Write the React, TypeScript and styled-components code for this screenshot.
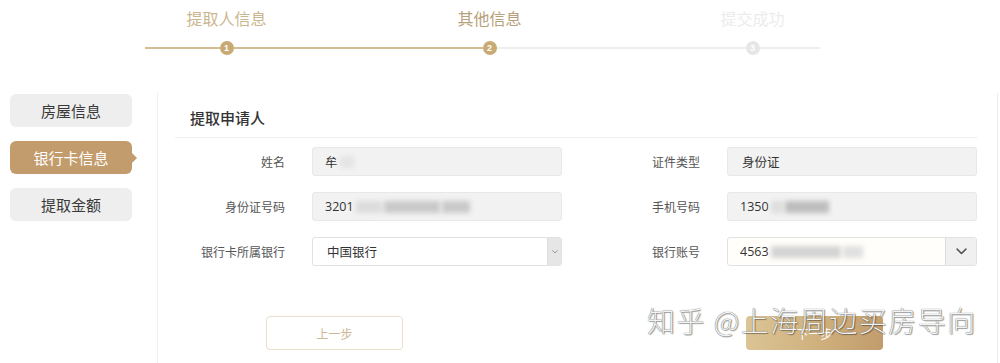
import React from "react";
import styled, { createGlobalStyle, css } from "styled-components";

const Global = createGlobalStyle`
  html, body { margin: 0; padding: 0; background: #fff; }
  body { font-family: "Noto Sans CJK SC", "Noto Sans", sans-serif; color: #333; }
  * { box-sizing: border-box; }
`;

const Page = styled.div`
  position: relative;
  width: 1000px;
  height: 363px;
  overflow: hidden;
  background: #fff;
`;

/* ---------- stepper ---------- */
const Stepper = styled.div`
  display: flex;
  margin-left: 95px;
  padding-top: 6px;
  height: 93px;
`;

const Step = styled.div`
  width: 263px;
  display: flex;
  flex-direction: column;
  align-items: center;
`;

const StepLabel = styled.div<{ $tone: "done" | "active" | "todo" }>`
  font-size: 16px;
  line-height: 24px;
  height: 24px;
  color: ${(p) => (p.$tone === "done" ? "#cbb68f" : p.$tone === "active" ? "#b8a07a" : "#ececec")};
`;

const Track = styled.div`
  margin-top: 11px;
  width: 100%;
  display: flex;
  align-items: center;
`;

const Seg = styled.div<{ $on: boolean; $trimStart?: number; $trimEnd?: number }>`
  flex: 1;
  height: 2px;
  ${(p) => {
    const c = p.$on ? "#d2bd93" : "#eeeeee";
    if (p.$trimStart)
      return css`background: linear-gradient(to right, transparent ${p.$trimStart}px, ${c} ${p.$trimStart}px);`;
    if (p.$trimEnd)
      return css`background: linear-gradient(to left, transparent ${p.$trimEnd}px, ${c} ${p.$trimEnd}px);`;
    return css`background: ${c};`;
  }}
`;

const Dot = styled.div<{ $on: boolean }>`
  width: 14px;
  height: 14px;
  border-radius: 50%;
  background: ${(p) => (p.$on ? "#c8ab74" : "#e6e6e6")};
  color: #fff;
  font-family: "Liberation Sans", sans-serif;
  font-size: 9px;
  font-weight: bold;
  display: flex;
  align-items: center;
  justify-content: center;
`;

/* ---------- body ---------- */
const Body = styled.div`
  display: flex;
  height: 270px;
`;

const Sidebar = styled.nav`
  width: 158px;
  border-right: 1px solid #f0f0f0;
  padding: 1px 0 0 10px;
  display: flex;
  flex-direction: column;
  gap: 14px;
`;

const NavItem = styled.div<{ $active?: boolean }>`
  position: relative;
  width: 122px;
  height: 33px;
  border-radius: 6px;
  font-size: 15px;
  display: flex;
  align-items: center;
  justify-content: center;
  background: #eeeeee;
  color: #3a3a3a;
  ${(p) =>
    p.$active &&
    css`
      background: #c29c6c;
      color: #fff;
      &::after {
        content: "";
        position: absolute;
        right: -5px;
        top: 50%;
        margin-top: -5px;
        border-left: 5px solid #c29c6c;
        border-top: 5px solid transparent;
        border-bottom: 5px solid transparent;
      }
    `}
`;

const Panel = styled.main`
  width: 840px;
  border-right: 1px solid #ededed;
  padding: 0 19px 0 17px;
`;

const Title = styled.h2`
  margin: 0;
  height: 45px;
  padding: 14px 0 0 15px;
  font-size: 15px;
  font-weight: 500;
  line-height: 22px;
  color: #333;
  border-bottom: 1px solid #f0f0f0;
`;

const FormGrid = styled.div`
  display: grid;
  grid-template-columns: 387px 387px;
  column-gap: 28px;
  row-gap: 16px;
  margin-top: 9px;
`;

const Field = styled.div`
  display: flex;
  align-items: center;
  gap: 27px;
`;

const Label = styled.label`
  width: 110px;
  text-align: right;
  font-size: 12px;
  color: #555;
`;

const Input = styled.div<{ $plain?: boolean; $tint?: string }>`
  width: 250px;
  height: 29px;
  border-radius: 3px;
  border: 1px solid ${(p) => (p.$plain ? "#e2e2e2" : "#e8e8e8")};
  background: ${(p) => p.$tint ?? (p.$plain ? "#fff" : "#f2f2f2")};
  display: flex;
  align-items: center;
  font-size: 12.5px;
  color: #333;
  overflow: hidden;
`;

const Value = styled.span<{ $pad?: number }>`
  flex: 1;
  padding-left: ${(p) => p.$pad ?? 12}px;
  display: flex;
  align-items: center;
  font-family: "Open Sans", "Noto Sans CJK SC", sans-serif;
`;

const Redact = styled.span<{ $w: number; $shade?: string }>`
  display: inline-block;
  width: ${(p) => p.$w}px;
  height: 12px;
  margin-left: 2px;
  background: ${(p) => p.$shade ?? "#c9c9c9"};
  filter: blur(2.5px);
`;

const ArrowBox = styled.span<{ $wide?: boolean }>`
  width: ${(p) => (p.$wide ? 31 : 14)}px;
  height: 100%;
  background: ${(p) => (p.$wide ? "#f0f0f0" : "#e6e6e6")};
  border-left: 1px solid #dcdcdc;
  display: flex;
  align-items: center;
  justify-content: center;
  color: ${(p) => (p.$wide ? "#555" : "#888")};
`;

const Actions = styled.div`
  display: grid;
  grid-template-columns: 387px 387px;
  column-gap: 28px;
  margin-top: 50px;
`;

const Button = styled.button<{ $primary?: boolean; $offset: number }>`
  margin-left: ${(p) => p.$offset}px;
  width: 137px;
  height: 34px;
  border-radius: 4px;
  font-family: "Noto Sans CJK SC", sans-serif;
  font-size: 12px;
  ${(p) =>
    p.$primary
      ? css`
          border: none;
          color: #fff;
          background: linear-gradient(100deg, #dcc597 0%, #d0b27f 50%, #c19b6c 100%);
        `
      : css`
          border: 1px solid #eadfcb;
          color: #cbb896;
          background: #fff;
        `}
`;

const Watermark = styled.div`
  position: absolute;
  left: 647px;
  top: 300px;
  font-size: 28px;
  font-weight: 300;
  letter-spacing: 1.5px;
  color: #f3f3f3;
  text-shadow: 0 0 1px #3a3a3a, 1px 1px 1px rgba(0, 0, 0, 0.35);
  white-space: nowrap;
`;

const Chevron = ({ size }: { size: number }) => (
  <svg width={size} height={size * 0.6} viewBox="0 0 10 6" fill="none">
    <path d="M1 1l4 4 4-4" stroke="currentColor" strokeWidth="1.4" strokeLinecap="round" strokeLinejoin="round" />
  </svg>
);

export default function App() {
  return (
    <Page>
      <Global />
      <Stepper>
        <Step>
          <StepLabel $tone="done">提取人信息</StepLabel>
          <Track>
            <Seg $on $trimStart={50} />
            <Dot $on>1</Dot>
            <Seg $on />
          </Track>
        </Step>
        <Step>
          <StepLabel $tone="active">其他信息</StepLabel>
          <Track>
            <Seg $on />
            <Dot $on>2</Dot>
            <Seg $on={false} />
          </Track>
        </Step>
        <Step>
          <StepLabel $tone="todo">提交成功</StepLabel>
          <Track>
            <Seg $on={false} />
            <Dot $on={false}>3</Dot>
            <Seg $on={false} $trimEnd={64} />
          </Track>
        </Step>
      </Stepper>
      <Body>
        <Sidebar>
          <NavItem>房屋信息</NavItem>
          <NavItem $active>银行卡信息</NavItem>
          <NavItem>提取金额</NavItem>
        </Sidebar>
        <Panel>
          <Title>提取申请人</Title>
          <FormGrid>
            <Field>
              <Label>姓名</Label>
              <Input>
                <Value>
                  牟<Redact $w={14} $shade="#e4e4e4" />
                </Value>
              </Input>
            </Field>
            <Field>
              <Label>证件类型</Label>
              <Input>
                <Value $pad={14}>身份证</Value>
              </Input>
            </Field>
            <Field>
              <Label>身份证号码</Label>
              <Input>
                <Value>
                  3201
                  <Redact $w={26} $shade="#dcdcdc" />
                  <Redact $w={56} />
                  <Redact $w={28} />
                </Value>
              </Input>
            </Field>
            <Field>
              <Label>手机号码</Label>
              <Input>
                <Value>
                  1350
                  <Redact $w={12} $shade="#dedede" />
                  <Redact $w={44} $shade="#bdbdbd" />
                </Value>
              </Input>
            </Field>
            <Field>
              <Label>银行卡所属银行</Label>
              <Input $plain>
                <Value $pad={14}>中国银行</Value>
                <ArrowBox>
                  <Chevron size={6} />
                </ArrowBox>
              </Input>
            </Field>
            <Field>
              <Label>银行账号</Label>
              <Input $plain $tint="#fffefa">
                <Value>
                  4563
                  <Redact $w={70} $shade="#d4d4d4" />
                  <Redact $w={20} $shade="#e0e0e0" />
                </Value>
                <ArrowBox $wide>
                  <Chevron size={11} />
                </ArrowBox>
              </Input>
            </Field>
          </FormGrid>
          <Actions>
            <div>
              <Button $offset={91}>上一步</Button>
            </div>
            <div>
              <Button $primary $offset={156}>下一步</Button>
            </div>
          </Actions>
        </Panel>
      </Body>
      <Watermark>知乎 @上海周边买房导向</Watermark>
    </Page>
  );
}
